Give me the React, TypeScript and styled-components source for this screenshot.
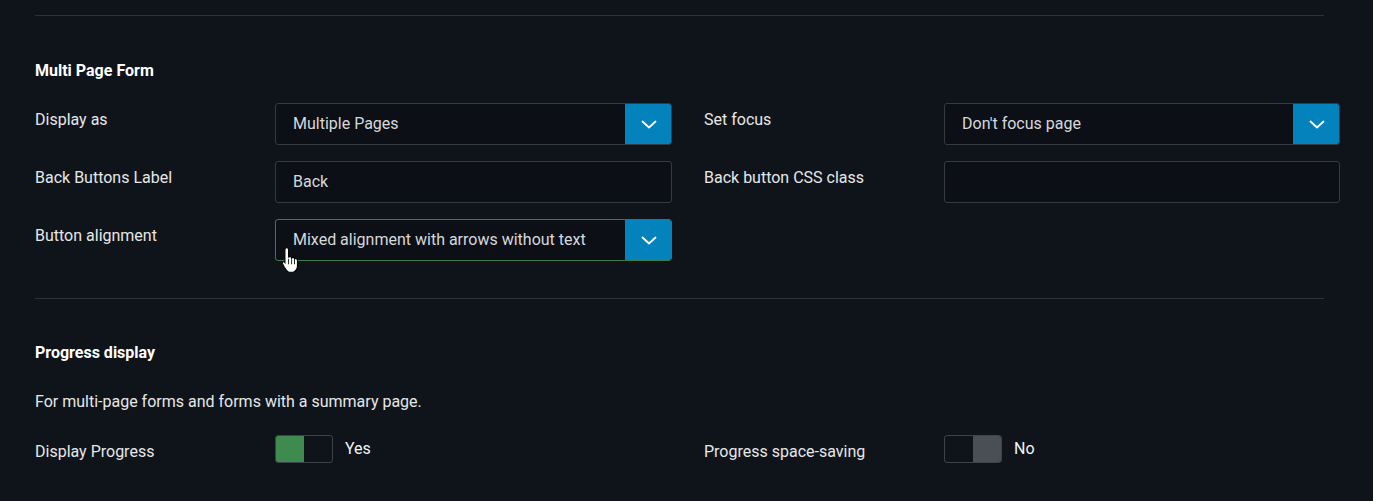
import React from "react";
import styled, { createGlobalStyle } from "styled-components";

const GlobalStyle = createGlobalStyle`
  html, body {
    margin: 0;
    padding: 0;
    background: #0f141a;
    font-family: Roboto, "Liberation Sans", Arial, sans-serif;
    color: #e9eaeb;
  }
  * { box-sizing: border-box; }
`;

const Page = styled.div`
  padding: 15px 0 0 35px;
  width: 1373px;
  height: 501px;
  overflow: hidden;
  position: relative;
`;

const Divider = styled.div<{ $mt?: number }>`
  width: 1289px;
  height: 1px;
  background: #2c3239;
  margin-top: ${(p) => p.$mt ?? 0}px;
`;

const Heading = styled.h3<{ $mt: number }>`
  margin: ${(p) => p.$mt}px 0 0;
  font-size: 16px;
  line-height: 20px;
  font-weight: 700;
  color: #ffffff;
`;

const Grid = styled.div<{ $mt: number }>`
  margin-top: ${(p) => p.$mt}px;
  display: grid;
  grid-template-columns: 240px 397px 272px 396px;
  row-gap: 16px;
  grid-auto-rows: minmax(42px, auto);
`;

const Label = styled.div<{ $right?: boolean }>`
  padding-top: 7px;
  padding-left: ${(p) => (p.$right ? 32 : 0)}px;
  font-size: 16px;
  line-height: 20px;
  color: #e6e7e8;
`;

const FieldBox = styled.div<{ $focus?: boolean }>`
  height: 42px;
  display: flex;
  align-items: stretch;
  border: 1px solid ${(p) => (p.$focus ? "#3e7a4d" : "#353a42")};
  border-radius: 3px;
  background: #0c1016;
  overflow: hidden;
`;

const FieldText = styled.div`
  flex: 1;
  display: flex;
  align-items: center;
  padding-left: 17px;
  padding-bottom: 1px;
  font-size: 16px;
  color: #d6d8db;
  white-space: nowrap;
`;

const Chevron = styled.div`
  width: 47px;
  flex: none;
  background: #0482bb;
  display: flex;
  align-items: center;
  justify-content: center;
  margin: -1px -1px -1px 0;
`;

const Empty = styled.div``;

const Description = styled.p`
  margin: 29px 0 0;
  font-size: 16px;
  line-height: 20px;
  color: #e6e7e8;
`;

const ToggleGrid = styled.div`
  margin-top: 23px;
  display: grid;
  grid-template-columns: 240px 397px 272px 396px;
`;

const ToggleWrap = styled.div`
  display: flex;
  align-items: center;
  gap: 12px;
  height: 28px;
`;

const Switch = styled.div<{ $on: boolean }>`
  width: 58px;
  height: 28px;
  border: 1px solid #3d434b;
  border-radius: 3px;
  display: flex;
  justify-content: ${(p) => (p.$on ? "flex-start" : "flex-end")};
  background: #0f141a;
  overflow: hidden;
`;

const Knob = styled.div<{ $on: boolean }>`
  width: 29px;
  margin: -1px;
  background: ${(p) => (p.$on ? "#3f8a4f" : "#4a4f56")};
  border-radius: 2px;
`;

const ToggleText = styled.span`
  font-size: 16px;
  color: #f2f3f4;
  margin-top: -2px;
`;

const Cursor = styled.svg`
  position: absolute;
  left: 281px;
  top: 246px;
`;

const ChevronIcon = () => (
  <svg width="16" height="9" viewBox="0 0 16 9">
    <polyline points="1.5,1.5 8,7.5 14.5,1.5" fill="none" stroke="#fff" strokeWidth="1.8" strokeLinecap="round" strokeLinejoin="round" />
  </svg>
);

const Select = ({ value, focus }: { value: string; focus?: boolean }) => (
  <FieldBox $focus={focus}>
    <FieldText>{value}</FieldText>
    <Chevron>
      <ChevronIcon />
    </Chevron>
  </FieldBox>
);

const Input = ({ value }: { value: string }) => (
  <FieldBox>
    <FieldText>{value}</FieldText>
  </FieldBox>
);

const Toggle = ({ on, label }: { on: boolean; label: string }) => (
  <ToggleWrap>
    <Switch $on={on}>
      <Knob $on={on} />
    </Switch>
    <ToggleText>{label}</ToggleText>
  </ToggleWrap>
);

export default function App() {
  return (
    <>
      <GlobalStyle />
      <Page>
        <Divider />
        <Heading $mt={45}>Multi Page Form</Heading>
        <Grid $mt={22}>
          <Label>Display as</Label>
          <Select value="Multiple Pages" />
          <Label $right>Set focus</Label>
          <Select value="Don't focus page" />

          <Label>Back Buttons Label</Label>
          <Input value="Back" />
          <Label $right>Back button CSS class</Label>
          <Input value="" />

          <Label>Button alignment</Label>
          <Select value="Mixed alignment with arrows without text" focus />
          <Empty />
          <Empty />
        </Grid>
        <Divider $mt={37} />
        <Heading $mt={44}>Progress display</Heading>
        <Description>For multi-page forms and forms with a summary page.</Description>
        <ToggleGrid>
          <Label>Display Progress</Label>
          <Toggle on label="Yes" />
          <Label $right>Progress space-saving</Label>
          <Toggle on={false} label="No" />
        </ToggleGrid>
        <Cursor width="20" height="28" viewBox="0 0 16 23">
          <path
            d="M4.5 1.5 C5.5 1.5 6 2.2 6 3 V9.5 C6.3 8.8 7 8.6 7.6 8.8 C8.2 9 8.5 9.5 8.5 10 C8.9 9.4 9.6 9.3 10.1 9.5 C10.6 9.8 10.9 10.3 10.9 10.8 C11.3 10.3 12 10.2 12.5 10.5 C13 10.8 13.3 11.3 13.3 12 V16 C13.3 18.5 12 20.5 10 21.5 H6 C4.5 20.5 3.5 19 2.5 17.5 L1 14.5 C0.7 13.8 1 13.1 1.6 12.9 C2.2 12.7 2.7 13 3 13.5 L3 3 C3 2.2 3.5 1.5 4.5 1.5 Z"
            fill="#fff"
            stroke="#000"
            strokeWidth="0.9"
          />
          <path d="M6 10.5 V15 M8.5 11 V15 M10.9 11.5 V15" stroke="#000" strokeWidth="0.7" />
        </Cursor>
      </Page>
    </>
  );
}
